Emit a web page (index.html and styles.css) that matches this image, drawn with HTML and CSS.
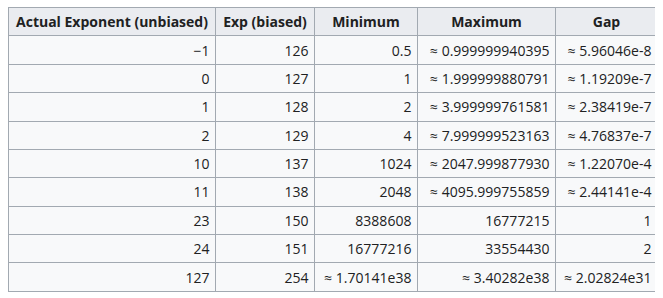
FILE: index.html
```html
<!doctype html>
<html lang="en">
  <head>
    <meta charset="utf-8">
    <title>Single precision exponent ranges</title>
    <link rel="stylesheet" href="styles.css">
  </head>
  <body>
    <table class="wikitable">
      <colgroup>
        <col class="col-actual">
        <col class="col-exp">
        <col class="col-min">
        <col class="col-max">
        <col class="col-gap">
      </colgroup>
      <thead>
        <tr>
          <th>Actual Exponent (unbiased)</th>
          <th>Exp (biased)</th>
          <th>Minimum</th>
          <th>Maximum</th>
          <th>Gap</th>
        </tr>
      </thead>
      <tbody>
        <tr><td>&minus;1</td><td>126</td><td>0.5</td><td>&asymp; 0.999999940395</td><td>&asymp; 5.96046e-8</td></tr>
        <tr><td>0</td><td>127</td><td>1</td><td>&asymp; 1.999999880791</td><td>&asymp; 1.19209e-7</td></tr>
        <tr><td>1</td><td>128</td><td>2</td><td>&asymp; 3.999999761581</td><td>&asymp; 2.38419e-7</td></tr>
        <tr><td>2</td><td>129</td><td>4</td><td>&asymp; 7.999999523163</td><td>&asymp; 4.76837e-7</td></tr>
        <tr><td>10</td><td>137</td><td>1024</td><td>&asymp; 2047.999877930</td><td>&asymp; 1.22070e-4</td></tr>
        <tr><td>11</td><td>138</td><td>2048</td><td>&asymp; 4095.999755859</td><td>&asymp; 2.44141e-4</td></tr>
        <tr><td>23</td><td>150</td><td>8388608</td><td>16777215</td><td>1</td></tr>
        <tr><td>24</td><td>151</td><td>16777216</td><td>33554430</td><td>2</td></tr>
        <tr><td>127</td><td>254</td><td>&asymp; 1.70141e38</td><td>&asymp; 3.40282e38</td><td>&asymp; 2.02824e31</td></tr>
      </tbody>
    </table>
  </body>
</html>
```
FILE: styles.css
```css
body {
  margin: 7px 8px;
  background: #ffffff;
  color: #202122;
  font-family: "Open Sans", "Noto Sans", sans-serif;
}

.wikitable {
  border-collapse: collapse;
  table-layout: fixed;
  width: 650px;
  background: #f8f9fa;
  color: #202122;
  border: 1px solid #a2a9b1;
  font-size: 14px;
}

.wikitable th,
.wikitable td {
  border: 1px solid #a2a9b1;
  padding: 3.2px 5.6px;
  line-height: 21px;
  white-space: nowrap;
  overflow: hidden;
}

.wikitable th {
  background: #eaecf0;
  font-weight: bold;
  text-align: center;
}

.wikitable td {
  text-align: right;
}

.col-actual { width: 207px; }
.col-exp { width: 99px; }
.col-min { width: 103px; }
.col-max { width: 138px; }
.col-gap { width: 102px; }
```
